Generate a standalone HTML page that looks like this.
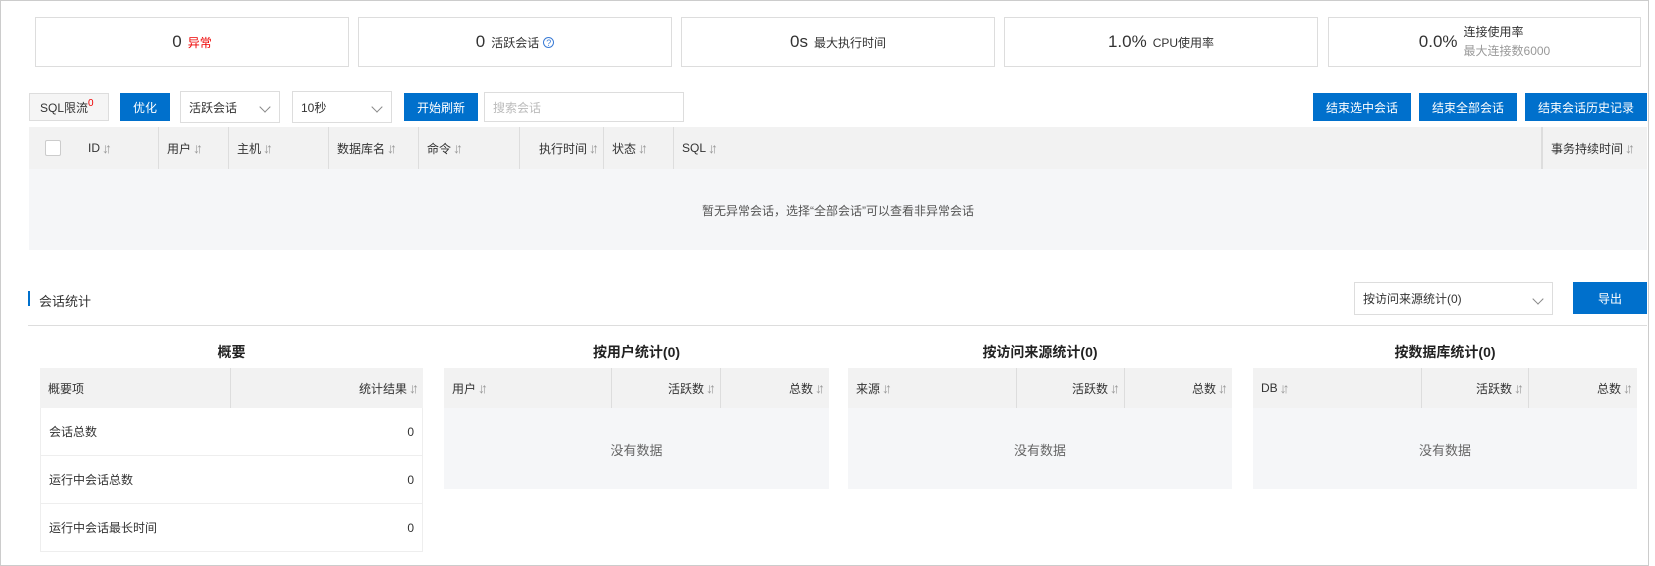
<!DOCTYPE html>
<html><head><meta charset="utf-8">
<style>
*{box-sizing:border-box;margin:0;padding:0}
body{width:1655px;height:566px;background:#fff;font-family:"Liberation Sans","Noto Sans CJK SC",sans-serif;font-size:12px;color:#333;position:relative;overflow:hidden}
.abs{position:absolute}
.outer{left:0;top:0;width:1649px;height:566px;border:1px solid #ccc}
.card{top:17px;height:50px;border:1px solid #ddd;width:314px;display:flex;align-items:center;justify-content:center}
.card b{font-weight:normal;font-size:17px;margin-right:6px}
.btn{background:#0070cc;color:#fff;display:flex;align-items:center;justify-content:center;font-size:12px}
.sel{border:1px solid #ddd;display:flex;align-items:center;padding-left:8px;font-size:12px}
.sel i{position:absolute;right:10px;top:11px;width:8px;height:8px;border-right:1px solid #888;border-bottom:1px solid #888;transform:rotate(45deg)}
.s{color:#999;font-size:14px;letter-spacing:-4px;margin-left:2px;margin-right:4px}
.th{top:127px;height:42px;display:flex;align-items:center;padding-left:8px;border-right:1px solid #ddd}
.t{background:#f2f2f2}
.hd{height:40px;display:flex;align-items:center;padding:0 8px;border-right:1px solid #ddd;position:absolute;top:368px}
.title{top:342px;font-size:14px;color:#222;text-align:center;font-weight:bold}
.row{height:48px;border:1px solid #eee;border-top:none;display:flex;align-items:center;justify-content:space-between;padding:0 8px;left:40px;width:383px}
.nd{color:#666;font-size:13px;text-align:center}
</style></head><body>
<div class="abs outer"></div>
<div class="abs card" style="left:35px"><b>0</b><span style="color:#e00">异常</span></div>
<div class="abs card" style="left:358px"><b>0</b>活跃会话 <span style="color:#3a7bd5;margin-left:4px;border:1px solid #3a7bd5;border-radius:50%;width:11px;height:11px;font-size:9px;line-height:10px;text-align:center">?</span></div>
<div class="abs card" style="left:681px"><b>0s</b>最大执行时间</div>
<div class="abs card" style="left:1004px"><b>1.0%</b>CPU使用率</div>
<div class="abs card" style="left:1328px;width:313px"><b>0.0%</b><div style="line-height:19px">连接使用率<br><span style="color:#999">最大连接数6000</span></div></div>

<div class="abs sel" style="left:29px;top:93px;width:80px;height:28px;background:#f5f5f5;padding-left:10px">SQL限流<sup style="color:#e00;font-size:10px;position:relative;top:-4px">0</sup></div>
<div class="abs btn" style="left:120px;top:93px;width:50px;height:28px">优化</div>
<div class="abs sel" style="left:180px;top:91px;width:100px;height:32px">活跃会话<i></i></div>
<div class="abs sel" style="left:292px;top:91px;width:100px;height:32px">10秒<i></i></div>
<div class="abs btn" style="left:404px;top:93px;width:74px;height:28px">开始刷新</div>
<div class="abs sel" style="left:484px;top:92px;width:200px;height:30px;color:#bbb">搜索会话</div>
<div class="abs btn" style="left:1313px;top:93px;width:98px;height:28px">结束选中会话</div>
<div class="abs btn" style="left:1419px;top:93px;width:98px;height:28px">结束全部会话</div>
<div class="abs btn" style="left:1525px;top:93px;width:122px;height:28px">结束会话历史记录</div>

<div class="abs t" style="left:29px;top:127px;width:1618px;height:42px"></div>
<div class="abs" style="left:29px;top:169px;width:1618px;height:81px;background:#f5f6f8"></div>
<div class="abs" style="left:45px;top:140px;width:16px;height:16px;border:1px solid #ccc;background:#fff;border-radius:2px"></div>
<div class="abs th" style="left:79px;width:80px;padding-left:9px">ID<span class="s">↓↑</span></div>
<div class="abs th" style="left:159px;width:70px">用户<span class="s">↓↑</span></div>
<div class="abs th" style="left:229px;width:100px">主机<span class="s">↓↑</span></div>
<div class="abs th" style="left:329px;width:90px">数据库名<span class="s">↓↑</span></div>
<div class="abs th" style="left:419px;width:101px">命令<span class="s">↓↑</span></div>
<div class="abs th" style="left:520px;width:84px;justify-content:flex-end;padding-right:4px">执行时间<span class="s">↓↑</span></div>
<div class="abs th" style="left:604px;width:70px">状态<span class="s">↓↑</span></div>
<div class="abs th" style="left:674px;width:868px">SQL<span class="s">↓↑</span></div>
<div class="abs th" style="left:1542px;width:105px;border-left:1px solid #ddd;border-right:none">事务持续时间<span class="s">↓↑</span></div>
<div class="abs" style="left:29px;top:202px;width:1618px;text-align:center;color:#555">暂无异常会话，选择“全部会话”可以查看非异常会话</div>

<div class="abs" style="left:28px;top:291px;width:2px;height:15px;background:#0070cc"></div>
<div class="abs" style="left:39px;top:291px;font-size:13px">会话统计</div>
<div class="abs" style="left:28px;top:325px;width:1619px;height:1px;background:#ddd"></div>
<div class="abs sel" style="left:1354px;top:282px;width:199px;height:33px">按访问来源统计(0)<i style="top:12px"></i></div>
<div class="abs btn" style="left:1573px;top:282px;width:74px;height:32px">导出</div>

<div class="abs title" style="left:40px;width:383px">概要</div>
<div class="abs t" style="left:40px;top:368px;width:383px;height:40px"></div>
<div class="hd" style="left:40px;width:191px">概要项</div>
<div class="hd" style="left:231px;width:192px;justify-content:flex-end;border-right:none;padding-right:4px">统计结果<span class="s">↓↑</span></div>
<div class="abs row" style="top:408px"><span>会话总数</span><span>0</span></div>
<div class="abs row" style="top:456px"><span>运行中会话总数</span><span>0</span></div>
<div class="abs row" style="top:504px"><span>运行中会话最长时间</span><span>0</span></div>

<div class="abs title" style="left:444px;width:385px">按用户统计(0)</div>
<div class="abs" style="left:444px;top:368px;width:385px;height:121px;background:#f5f6f8"></div>
<div class="abs t" style="left:444px;top:368px;width:385px;height:40px"></div>
<div class="hd" style="left:444px;width:168px">用户<span class="s">↓↑</span></div>
<div class="hd" style="left:612px;width:109px;justify-content:flex-end;padding-right:4px">活跃数<span class="s">↓↑</span></div>
<div class="hd" style="left:721px;width:108px;justify-content:flex-end;border-right:none;padding-right:4px">总数<span class="s">↓↑</span></div>
<div class="abs nd" style="left:444px;top:440px;width:385px">没有数据</div>

<div class="abs title" style="left:848px;width:384px">按访问来源统计(0)</div>
<div class="abs" style="left:848px;top:368px;width:384px;height:121px;background:#f5f6f8"></div>
<div class="abs t" style="left:848px;top:368px;width:384px;height:40px"></div>
<div class="hd" style="left:848px;width:169px">来源<span class="s">↓↑</span></div>
<div class="hd" style="left:1017px;width:108px;justify-content:flex-end;padding-right:4px">活跃数<span class="s">↓↑</span></div>
<div class="hd" style="left:1125px;width:107px;justify-content:flex-end;border-right:none;padding-right:4px">总数<span class="s">↓↑</span></div>
<div class="abs nd" style="left:848px;top:440px;width:384px">没有数据</div>

<div class="abs title" style="left:1253px;width:384px">按数据库统计(0)</div>
<div class="abs" style="left:1253px;top:368px;width:384px;height:121px;background:#f5f6f8"></div>
<div class="abs t" style="left:1253px;top:368px;width:384px;height:40px"></div>
<div class="hd" style="left:1253px;width:169px">DB<span class="s">↓↑</span></div>
<div class="hd" style="left:1422px;width:107px;justify-content:flex-end;padding-right:4px">活跃数<span class="s">↓↑</span></div>
<div class="hd" style="left:1529px;width:108px;justify-content:flex-end;border-right:none;padding-right:4px">总数<span class="s">↓↑</span></div>
<div class="abs nd" style="left:1253px;top:440px;width:384px">没有数据</div>
</body></html>
